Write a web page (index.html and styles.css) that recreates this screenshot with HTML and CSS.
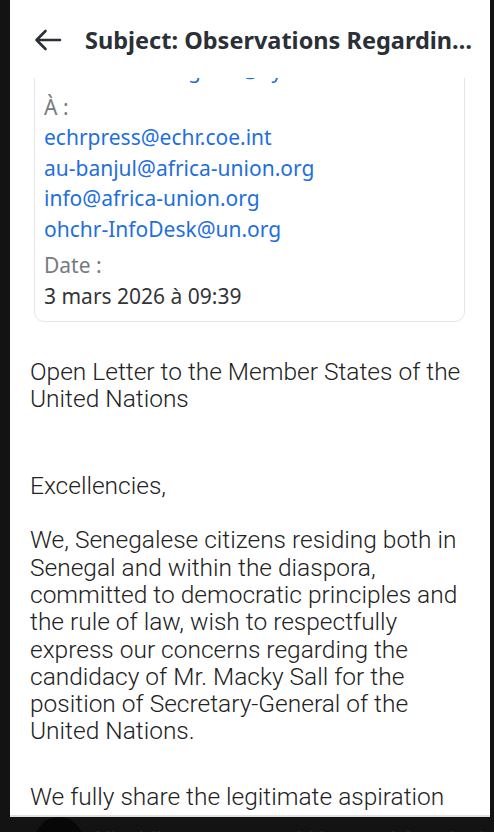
FILE: index.html
```html
<!DOCTYPE html>
<html lang="fr">
<head>
<meta charset="utf-8">
<title>Subject: Observations Regarding</title>
<link rel="stylesheet" href="styles.css">
</head>
<body>
<div class="screen">
  <header class="topbar">
    <svg class="back" viewBox="0 0 28 22" width="28" height="22" aria-hidden="true">
      <path d="M2.5 11H26M11.5 2L2.5 11L11.5 20" fill="none" stroke="#2b2f36" stroke-width="2.6" stroke-linecap="round" stroke-linejoin="round"/>
    </svg>
    <h1 class="title">Subject: Observations Regardin…</h1>
  </header>
  <div class="viewport">
    <div class="scroll">
      <section class="meta-card">
        <div class="val link">mediacentre-ngo.hr@ay.int</div>
        <div class="label">À :</div>
        <div class="val link">echrpress@echr.coe.int</div>
        <div class="val link">au-banjul@africa-union.org</div>
        <div class="val link">info@africa-union.org</div>
        <div class="val link">ohchr-InfoDesk@un.org</div>
        <div class="label">Date :</div>
        <div class="val">3 mars 2026 à 09:39</div>
      </section>
      <div class="letter">
        <p class="p-title">Open Letter to the Member States of the United Nations</p>
        <p class="p-greet">Excellencies,</p>
        <p class="p-body">We, Senegalese citizens residing both in Senegal and within the diaspora, committed to democratic principles and the rule of law, wish to respectfully express our concerns regarding the candidacy of Mr. Macky Sall for the position of Secretary-General of the United Nations.</p>
        <p class="p-next">We fully share the legitimate aspiration of the African continent to see one of its own at the head of the Organization.</p>
      </div>
    </div>
  </div>
</div>
<div class="below">
  <span class="avatar"></span>
  <span class="below-text">N'oubliez pas cette vidéo aussi, bande de curieux</span>
</div>
</body>
</html>
```

FILE: styles.css
```css
html, body {
  margin: 0;
  padding: 0;
  background: #131313;
  overflow: hidden;
}

.screen {
  margin: 0 4px 0 10px;
  height: 815px;
  background: #ffffff;
  border-bottom: 2px solid #dedfe2;
  display: flex;
  flex-direction: column;
  overflow: hidden;
}

.topbar {
  height: 76px;
  padding-top: 2px;
  flex: none;
  display: flex;
  align-items: center;
  padding-left: 24px;
  gap: 23px;
  background: #ffffff;
}

.back {
  flex: none;
  display: block;
}

.title {
  margin: 0;
  font-family: "Noto Sans", "Open Sans", sans-serif;
  font-weight: 700;
  font-size: 23.5px;
  color: #2b2f36;
  white-space: nowrap;
}

.viewport {
  flex: 1;
  overflow: hidden;
}

.scroll {
  margin-top: -34px;
}

.meta-card {
  margin: 0 25px 0 24px;
  border: 1px solid #e3e5e8;
  border-radius: 10px;
  padding: 10px 10px 10px 9px;
  font-family: "Noto Sans", "Open Sans", sans-serif;
  font-size: 21px;
  line-height: 30.5px;
}

.label {
  margin-top: 6px;
  color: #767a80;
}

.val {
  color: #333538;
  white-space: nowrap;
}

.val.link {
  color: #1f6fde;
}

.letter {
  padding: 0 26px 0 20px;
  margin-top: 36px;
  font-family: Roboto, "Noto Sans", sans-serif;
  font-weight: 300;
  font-size: 24.5px;
  line-height: 27.3px;
  color: #222222;
}

.letter p {
  margin: 0;
}

.letter .p-greet {
  margin-top: 59px;
}

.letter .p-body {
  margin-top: 27.5px;
}

.letter .p-next {
  margin-top: 38.5px;
}

.below {
  display: flex;
  align-items: flex-start;
  gap: 12px;
  padding-left: 35px;
  height: 15px;
  overflow: hidden;
}

.avatar {
  flex: none;
  width: 48px;
  height: 48px;
  border-radius: 50%;
  background: #070707;
}

.below-text {
  margin-top: 10px;
  font-family: Roboto, sans-serif;
  font-size: 22px;
  color: #262626;
  white-space: nowrap;
}
```
